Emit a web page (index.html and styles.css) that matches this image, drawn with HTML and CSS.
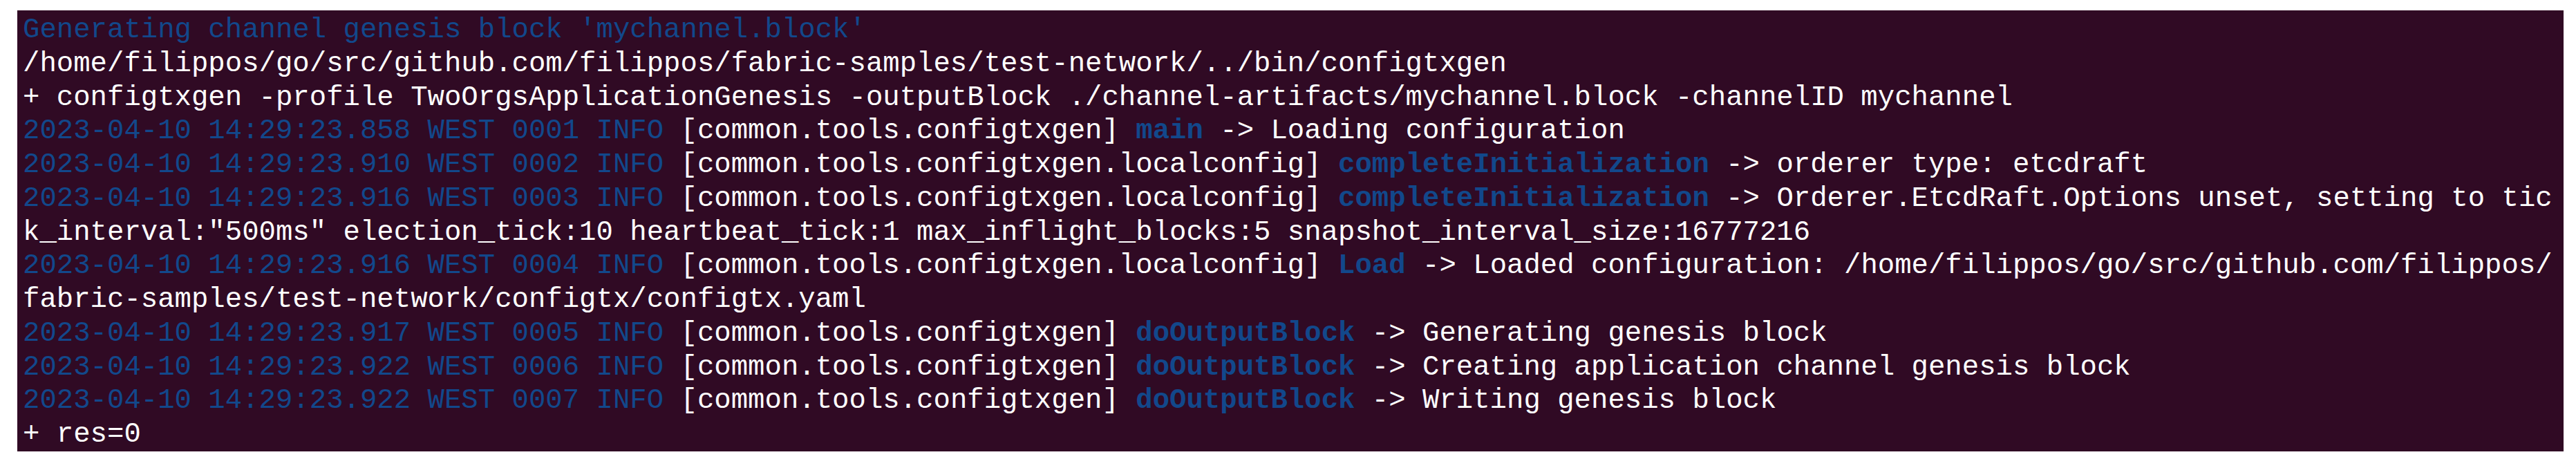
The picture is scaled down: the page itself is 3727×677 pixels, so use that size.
FILE: index.html
```html
<!DOCTYPE html>
<html lang="en">
<head>
<meta charset="utf-8">
<title>Terminal</title>
<link rel="stylesheet" href="styles.css">
</head>
<body>
<div class="page">
  <div class="terminal">
    <div class="row"><span class="c-blue">Generating channel genesis block 'mychannel.block'</span></div>
    <div class="row">/home/filippos/go/src/github.com/filippos/fabric-samples/test-network/../bin/configtxgen</div>
    <div class="row">+ configtxgen -profile TwoOrgsApplicationGenesis -outputBlock ./channel-artifacts/mychannel.block -channelID mychannel</div>
    <div class="row"><span class="c-blue">2023-04-10 14:29:23.858 WEST 0001 INFO</span> [common.tools.configtxgen] <span class="c-fn">main</span> -&gt; Loading configuration</div>
    <div class="row"><span class="c-blue">2023-04-10 14:29:23.910 WEST 0002 INFO</span> [common.tools.configtxgen.localconfig] <span class="c-fn">completeInitialization</span> -&gt; orderer type: etcdraft</div>
    <div class="row"><span class="c-blue">2023-04-10 14:29:23.916 WEST 0003 INFO</span> [common.tools.configtxgen.localconfig] <span class="c-fn">completeInitialization</span> -&gt; Orderer.EtcdRaft.Options unset, setting to tic</div>
    <div class="row">k_interval:"500ms" election_tick:10 heartbeat_tick:1 max_inflight_blocks:5 snapshot_interval_size:16777216</div>
    <div class="row"><span class="c-blue">2023-04-10 14:29:23.916 WEST 0004 INFO</span> [common.tools.configtxgen.localconfig] <span class="c-fn">Load</span> -&gt; Loaded configuration: /home/filippos/go/src/github.com/filippos/</div>
    <div class="row">fabric-samples/test-network/configtx/configtx.yaml</div>
    <div class="row"><span class="c-blue">2023-04-10 14:29:23.917 WEST 0005 INFO</span> [common.tools.configtxgen] <span class="c-fn">doOutputBlock</span> -&gt; Generating genesis block</div>
    <div class="row"><span class="c-blue">2023-04-10 14:29:23.922 WEST 0006 INFO</span> [common.tools.configtxgen] <span class="c-fn">doOutputBlock</span> -&gt; Creating application channel genesis block</div>
    <div class="row"><span class="c-blue">2023-04-10 14:29:23.922 WEST 0007 INFO</span> [common.tools.configtxgen] <span class="c-fn">doOutputBlock</span> -&gt; Writing genesis block</div>
    <div class="row">+ res=0</div>
  </div>
</div>
</body>
</html>
```

FILE: styles.css
```css
html, body {
  margin: 0;
  padding: 0;
  background: #ffffff;
}

.page {
  padding: 15px 18px 24px 25px;
}

.terminal {
  background: #300a24;
  color: #ffffff;
  font-family: "Liberation Mono", "DejaVu Sans Mono", monospace;
  font-size: 40.67px;
  line-height: 48.75px;
  padding: 4px 16px 0 8px;
  height: 634px;
  overflow: hidden;
}

.row {
  white-space: pre;
  height: 48.75px;
}

.c-blue {
  color: #12488b;
}

.c-fn {
  color: #12488b;
  font-weight: bold;
}
```
